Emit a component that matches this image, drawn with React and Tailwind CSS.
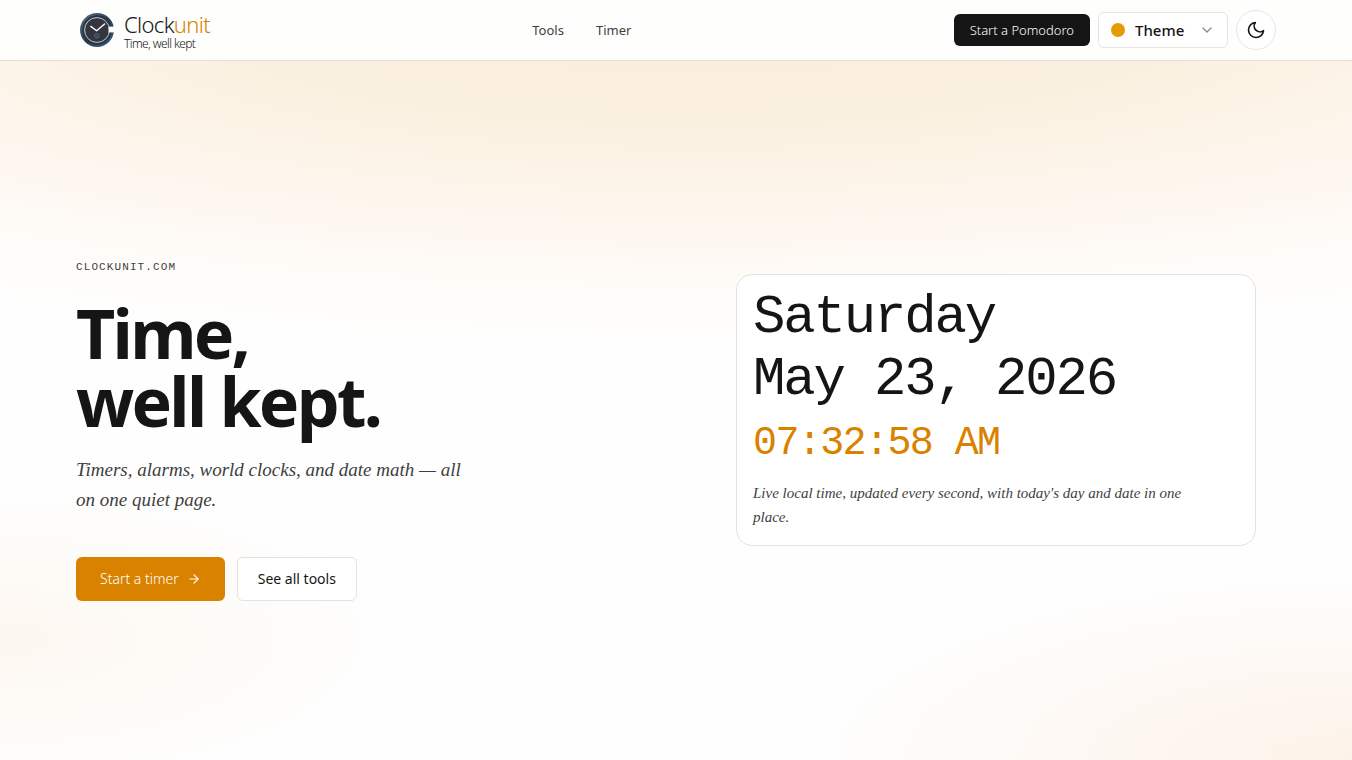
import { useState } from 'react'
import { ArrowRight, ChevronDown } from 'lucide-react'

const NAV = [
  { label: 'Tools', href: '#tools' },
  { label: 'Timer', href: '#timer' },
]

const THEMES = ['Theme', 'Amber', 'Ocean', 'Forest']

function LogoMark() {
  return (
    <svg viewBox="0 0 34 34" className="size-[34px]" aria-hidden="true">
      <defs>
        <linearGradient id="rim" x1="0" y1="0" x2="1" y2="1">
          <stop offset="0" stopColor="#62778b" />
          <stop offset="0.5" stopColor="#2b3b4d" />
          <stop offset="1" stopColor="#456482" />
        </linearGradient>
      </defs>
      <circle cx="17" cy="17" r="17" fill="url(#rim)" />
      <circle cx="17" cy="17" r="14" fill="none" stroke="#27323f" strokeWidth="1.4" />
      <circle cx="17" cy="17" r="12.4" fill="#33353f" stroke="#b9c3cd" strokeWidth="1" />
      {/* opening of the C */}
      <path d="M28.6 13.6h6v5.8h-6z" fill="#fefefd" />
      <path d="M10.8 13.4l5.8 4.4 8-6.8" fill="none" stroke="#fff" strokeWidth="1.4" strokeLinecap="round" strokeLinejoin="round" />
      <circle cx="16.8" cy="22.8" r="2.4" fill="#3d4a5c" stroke="#5f6f82" strokeWidth="0.6" />
    </svg>
  )
}

function MoonIcon() {
  return (
    <svg viewBox="0 0 24 24" className="size-5" fill="none" stroke="currentColor"
      strokeWidth="2" strokeLinecap="round" strokeLinejoin="round" aria-hidden="true">
      <path d="M21 12.79A9 9 0 1 1 11.21 3 7 7 0 0 0 21 12.79z" />
    </svg>
  )
}

function Header() {
  const [theme, setTheme] = useState('Theme')

  return (
    <header className="border-b border-[#e4e0dd] bg-[#fefefd]">
      <div className="mx-auto flex h-15 max-w-[1200px] items-center justify-between">
        <a href="#home" className="flex items-center gap-2.5 pl-1">
          <LogoMark />
          <span className="flex flex-col font-light text-[#151515]">
            <span className="text-[22px] leading-7 tracking-[-0.03em]">
              Clock<span className="text-[#d98200]">unit</span>
            </span>
            <span className="text-xs leading-3 tracking-tighter">Time, well kept</span>
          </span>
        </a>

        <nav className="flex gap-8">
          {NAV.map(n => (
            <a key={n.label} href={n.href} className="text-[13px] leading-5 text-[#3f3f3f]">{n.label}</a>
          ))}
        </nav>

        <div className="flex items-center gap-2">
          <button type="button" className="h-8 rounded-md bg-[#151515] px-4 text-[13px] leading-5 font-light text-[#fffefd]">
            Start a Pomodoro
          </button>
          <label className="flex h-9 w-[130px] items-center rounded-md border border-[#e5e5e5] bg-white px-3">
            <span className="size-3.5 shrink-0 rounded-full bg-[#e69a05]" />
            <select
              aria-label="Theme"
              value={theme}
              onChange={e => setTheme(e.target.value)}
              className="min-w-0 flex-1 appearance-none bg-transparent pl-2.5 text-[15px] leading-5 font-medium text-[#151515] outline-none">
              {THEMES.map(t => <option key={t}>{t}</option>)}
            </select>
            <ChevronDown className="size-4 shrink-0 text-[#8a8a8a]" />
          </label>
          <button type="button" aria-label="Dark mode"
            className="flex size-10 items-center justify-center rounded-full border border-[#e5e5e5] bg-white text-[#151515]">
            <MoonIcon />
          </button>
        </div>
      </div>
    </header>
  )
}

function ClockCard() {
  return (
    <section className="mx-auto w-full max-w-[520px] rounded-2xl border border-[#e2e2e2] bg-white px-4 pt-3 pb-4">
      <p className="font-['Liberation_Mono',monospace] text-[54px] leading-[62px] tracking-[-0.04em] text-[#151515]">
        Saturday<br />May 23, 2026
      </p>
      <p className="mt-2.5 font-['Liberation_Mono',monospace] text-[40px] leading-[46px] tracking-[-0.04em] text-[#d98200]">
        07:32:58 AM
      </p>
      <p className="mt-3.5 max-w-[440px] font-['Liberation_Serif',serif] text-[15px] leading-6 text-[#3f3f3f] italic">
        Live local time, updated every second, with today's day and date in one place.
      </p>
    </section>
  )
}

export default function App() {
  return (
    <div className="flex min-h-screen flex-col bg-[#fefefe] bg-[radial-gradient(ellipse_62%_38%_at_100%_100%,#fdf2e9,transparent_65%),radial-gradient(ellipse_45%_30%_at_0%_84%,#fdf7f0,transparent_65%),radial-gradient(ellipse_108%_46%_at_52%_0%,#faebd7,#faf0df_35%,#fdf5ea_55%,#fef7f1_68%,#fefcf8_82%,transparent)] font-['Noto_Sans',sans-serif]">
      <Header />
      <main className="mx-auto grid w-full max-w-[1200px] flex-1 grid-cols-2 items-center gap-20 pb-0.5">
        <div className="pt-10">
          <p className="font-['Liberation_Mono',monospace] text-[11px] leading-4 tracking-widest text-[#3f3f3f] uppercase">
            clockunit.com
          </p>
          <h1 className="mt-6 text-[68px] leading-[68px] font-bold tracking-[-0.04em] text-[#151515]">
            Time,<br />well kept.
          </h1>
          <p className="mt-5 max-w-[400px] font-['Liberation_Serif',serif] text-[19px] leading-[30px] text-[#3f3f3f] italic">
            Timers, alarms, world clocks, and date math — all on one quiet page.
          </p>
          <div className="mt-[42px] flex gap-3">
            <button type="button"
              className="flex h-11 items-center gap-2 rounded-md bg-[#d98200] px-6 text-sm font-light text-[#fffefd]">
              Start a timer
              <ArrowRight className="size-3.5" />
            </button>
            <button type="button"
              className="h-11 rounded-md border border-[#e2e2e2] bg-white px-5 text-sm text-[#151515]">
              See all tools
            </button>
          </div>
        </div>
        <ClockCard />
      </main>
    </div>
  )
}
